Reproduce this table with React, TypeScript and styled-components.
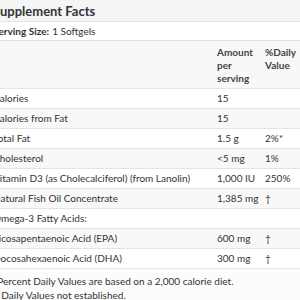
import React from "react";
import styled, { createGlobalStyle } from "styled-components";

const Global = createGlobalStyle`
  html, body { margin: 0; padding: 0; background: #fff; overflow: hidden; }
  body { font-family: Lato, "Open Sans", sans-serif; color: #333; }
`;

const Panel = styled.div`
  width: 308px;
  margin-left: -7px;
  font-size: 10px;
`;

const Title = styled.div`
  height: 22px;
  box-sizing: border-box;
  display: flex;
  align-items: center;
  background: #f5f5f5;
  border-bottom: 1px solid #e6e6e6;
  font-size: 13px;
  font-weight: 700;
  color: #333;
`;

const Serving = styled.div`
  height: 19px;
  box-sizing: border-box;
  display: flex;
  align-items: center;
  gap: 3px;
  border-bottom: 1px solid #dcdcdc;
  b { font-weight: 700; }
`;

const Row = styled.div<{ $shade?: boolean; $head?: boolean }>`
  display: grid;
  grid-template-columns: 1fr 48px 36px;
  align-items: ${(p) => (p.$head ? "start" : "center")};
  min-height: 20px;
  box-sizing: border-box;
  padding: ${(p) => (p.$head ? "5px 0 3px" : "0")};
  background: ${(p) => (p.$shade ? "#f8f8f8" : "#fff")};
  border-bottom: 1px solid #e4e4e4;
  line-height: 13px;
`;

const Head = styled.span`
  font-weight: 700;
  color: #444;
`;

const Foot = styled.div`
  padding-top: 5px;
  line-height: 14px;
  background: #fcfcfc;
  height: 40px;
`;

const rows: [string, string, string][] = [
  ["Calories", "15", ""],
  ["Calories from Fat", "15", ""],
  ["Total Fat", "1.5 g", "2%*"],
  ["Cholesterol", "<5 mg", "1%"],
  ["Vitamin D3 (as Cholecalciferol) (from Lanolin)", "1,000 IU", "250%"],
  ["Natural Fish Oil Concentrate", "1,385 mg", "†"],
  ["Omega-3 Fatty Acids:", "", ""],
  ["Eicosapentaenoic Acid (EPA)", "600 mg", "†"],
  ["Docosahexaenoic Acid (DHA)", "300 mg", "†"],
];

export default function App() {
  return (
    <>
      <Global />
      <Panel>
        <Title>Supplement Facts</Title>
        <Serving>
          <b>Serving Size:</b> 1 Softgels
        </Serving>
        <Row $shade $head style={{ minHeight: 47 }}>
          <span />
          <Head>Amount per serving</Head>
          <Head>%Daily Value</Head>
        </Row>
        {rows.map((r, i) => (
          <Row key={r[0]} $shade={i % 2 === 1}>
            <span>{r[0]}</span>
            <span>{r[1]}</span>
            <span>{r[2]}</span>
          </Row>
        ))}
        <Foot>
          *Percent Daily Values are based on a 2,000 calorie diet.
          <br />† Daily Values not established.
        </Foot>
      </Panel>
    </>
  );
}
